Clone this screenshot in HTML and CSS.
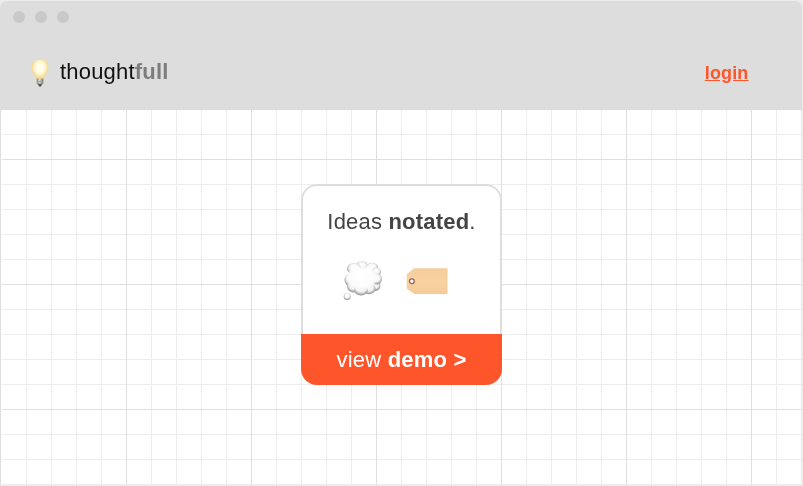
FILE: index.html
```
<!DOCTYPE html>
<html lang="en">
<head>
<meta charset="utf-8">
<title>thoughtfull</title>
<link rel="stylesheet" href="styles.css">
</head>
<body>
<div class="window">
  <header class="header">
    <div class="controls"><i></i><i></i><i></i></div>
    <nav class="nav">
      <div class="brand">
        <svg class="bulb" viewBox="0 0 18 30" width="18" height="30" aria-hidden="true">
          <defs>
            <radialGradient id="glow" cx=".5" cy=".42" r=".58">
              <stop offset="0" stop-color="#fffffa"/><stop offset=".4" stop-color="#fffbe6"/><stop offset=".7" stop-color="#fcebb4"/><stop offset="1" stop-color="#f0d283"/>
            </radialGradient>
            <linearGradient id="metal"><stop offset="0" stop-color="#858481"/><stop offset=".45" stop-color="#dedcd5"/><stop offset="1" stop-color="#77766f"/></linearGradient>
          </defs>
          <path d="M9 1.300C4.300 1.300 1 4.800 1 9.300c0 3.400 1.800 5.300 3.200 8 .7 1.500.9 3.200 1.700 3.700h6.200c.8-.5 1-2.200 1.700-3.700 1.400-2.700 3.200-4.600 3.200-8C17 4.800 13.700 1.300 9 1.300Z" fill="url(#glow)" stroke="#f5d888" stroke-width=".8"/>
          <path d="M5.700 20.500h6.600v4.700L10.800 27H7.200L5.700 25.200Z" fill="url(#metal)"/>
          <path d="M6 23.600l6-.5M6.300 25.600l5.400-.5" stroke="#888" stroke-width=".5"/>
          <path d="M7 26h4l-1 2.500H8Z" fill="#50504e"/>
        </svg>
        <span class="name">thought<b>full</b></span>
      </div>
      <a class="login" href="#">login</a>
    </nav>
  </header>
  <main class="canvas">
    <section class="card">
      <div class="content">
        <h1>Ideas <b>notated</b>.</h1>
        <div class="icons">
          <svg class="thought" viewBox="0 0 40 42" width="40" height="42" aria-hidden="true">
            <defs>
              <radialGradient id="puff" cx=".5" cy=".4" r=".62"><stop offset="0" stop-color="#fff"/><stop offset=".5" stop-color="#f4f4f4"/><stop offset="1" stop-color="#858585"/></radialGradient>
              <radialGradient id="cloud" cx=".5" cy=".4" r=".62"><stop offset="0" stop-color="#fff"/><stop offset=".75" stop-color="#fcfcfc"/><stop offset="1" stop-color="#ececec"/></radialGradient>
              <filter id="soft"><feGaussianBlur stdDeviation=".9"/></filter>
            </defs>
            <g fill="url(#puff)">
              <ellipse cx="19" cy="5.500" rx="5.500" ry="4.200"/><ellipse cx="29" cy="7.500" rx="6" ry="4.700"/><ellipse cx="33.500" cy="12" rx="4.500" ry="4.500"/><ellipse cx="32" cy="25.500" rx="5.500" ry="5.500"/><ellipse cx="33.500" cy="19" rx="5.500" ry="5.500"/><ellipse cx="11" cy="8.500" rx="7" ry="5.500"/><ellipse cx="7.500" cy="20" rx="6" ry="6.500"/><ellipse cx="10.500" cy="26.500" rx="6.500" ry="6"/><ellipse cx="26" cy="28.500" rx="6.500" ry="5.800"/><ellipse cx="18" cy="29.500" rx="7" ry="6"/>
            </g>
            <path d="M6 12Q9 4 16 6Q20 9 24 5Q30 7 31 11Q34 15 33 21Q31 27 26 29Q22 31 18 31Q15 29 11 29Q6 27 6 23Q2 18 6 12Z" fill="url(#cloud)" filter="url(#soft)"/>
            <circle cx="4.200" cy="36.500" r="3.500" fill="url(#puff)"/>
            <circle cx="4" cy="35.800" r="1.800" fill="#fff"/>
          </svg>
          <svg class="tag" viewBox="0 0 42 28" width="42" height="28" aria-hidden="true">
            <linearGradient id="paper" x2="0" y2="1"><stop stop-color="#f6cc9a"/><stop offset=".5" stop-color="#f9d2a1"/><stop offset="1" stop-color="#f4ca98"/></linearGradient>
            <path d="M8 1.300H41.500V27H8.500L.7 21.500V7.500Z" fill="url(#paper)"/>
            <circle cx="5.900" cy="14.200" r="2.400" fill="#fff" stroke="#936256" stroke-width="1.300"/>
          </svg>
        </div>
      </div>
      <a class="demo" href="#">view&nbsp;<b>demo &gt;</b></a>
    </section>
  </main>
</div>
</body>
</html>
```
FILE: styles.css
```
* { box-sizing: border-box; }
body {
  margin: 0;
  width: 803px;
  height: 486px;
  overflow: hidden;
  background: #ececec;
  font-family: "Liberation Sans", Arial, sans-serif;
}
.window {
  display: flex;
  flex-direction: column;
  width: 802px;
  height: 485px;
  padding-top: 1px;
  will-change: transform;
}
.header {
  height: 109px;
  flex: none;
  background: #ddd;
  border-radius: 7px 7px 0 0;
}
.controls { display: flex; gap: 10px; padding: 10px 13px 0; }
.controls i { width: 12px; height: 12px; border-radius: 50%; background: #c9c9c9; }
.nav {
  display: flex;
  justify-content: space-between;
  align-items: center;
  height: 60px;
  margin-top: 19px;
  padding: 0 53.5px 0 31px;
}
.brand { display: flex; align-items: center; gap: 11px; }
.bulb { margin-top: 2px; }
.name { font-size: 22px; line-height: 26px; color: #111; letter-spacing: .2px; }
.name b { color: #7d7d7d; }
.login { font-size: 18px; line-height: 22px; font-weight: bold; color: #ff552b; letter-spacing: .15px; margin-top: 1px; }
.canvas {
  flex: 1;
  display: flex;
  justify-content: center;
  align-items: flex-start;
  padding-top: 74px;
  border-left: 1px solid #ddd;
  background-color: #fff;
  background-image:
    linear-gradient(#fff, #fff),
    linear-gradient(#dfdfdf 1px, transparent 1px),
    linear-gradient(90deg, #dfdfdf 1px, transparent 1px),
    linear-gradient(#ededed 1px, transparent 1px),
    linear-gradient(90deg, #ededed 1px, transparent 1px);
  background-size: 1px 100%, 125px 125px, 125px 125px, 25px 25px, 25px 25px;
  background-position: 0 0, 0 49px, 125px 0, 0 24px, 25px 0;
  background-repeat: no-repeat, repeat, repeat, repeat, repeat;
}
.card {
  display: flex;
  flex-direction: column;
  width: 201px;
  height: 201px;
  border-radius: 16px;
  overflow: hidden;
}
.content {
  height: 150px;
  background: #fff;
  border: 2px solid #ddd;
  border-bottom: 0;
  border-radius: 16px 16px 0 0;
}
h1 {
  margin: 23px 0 0;
  text-align: center;
  font-size: 22px;
  line-height: 26px;
  font-weight: normal;
  color: #444;
  letter-spacing: .2px;
}
.icons { display: flex; gap: 23px; padding: 25px 0 0 40px; }
.tag { margin-top: 7px; }
.demo {
  display: flex;
  align-items: center;
  justify-content: center;
  height: 51px;
  background: #ff552b;
  color: #fff;
  text-decoration: none;
  font-size: 22px;
  letter-spacing: .2px;
}
```
